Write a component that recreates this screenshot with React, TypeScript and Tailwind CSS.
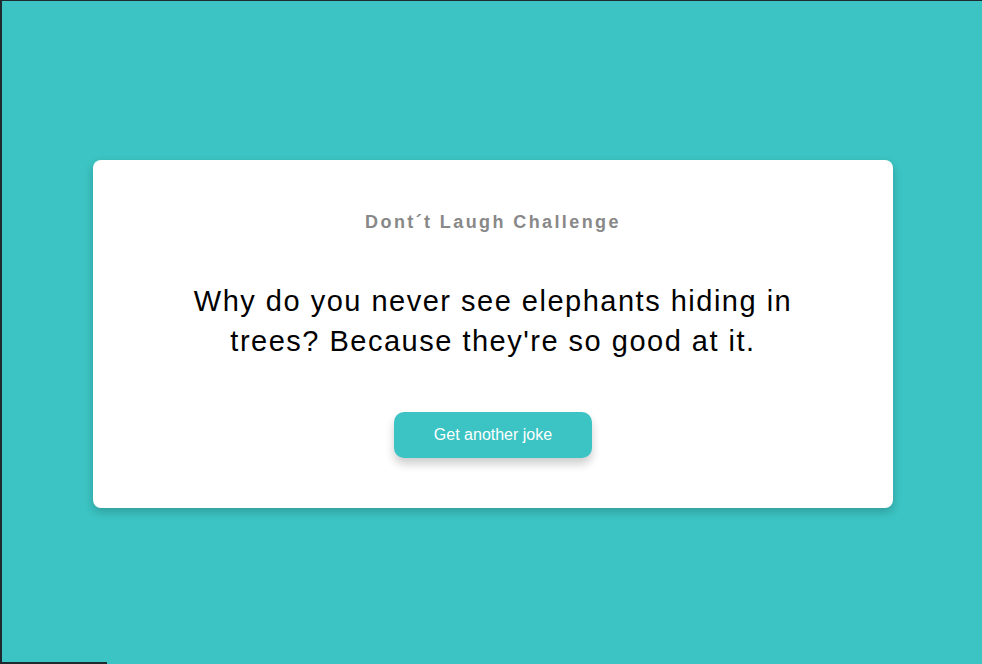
import React from "react";

export default function App() {
  return (
    <div
      className="relative flex h-[664px] w-full items-center justify-center border-l-2 border-t border-[#1f2a2e] bg-[#3bc4c3] pl-[2px] pt-[3px]"
      style={{ fontFamily: '"Liberation Sans", Arial, sans-serif' }}
    >
      <div className="flex w-[800px] flex-col items-center rounded-lg bg-white px-[50px] pb-[50px] pt-[52px] shadow-[0_4px_10px_rgba(0,0,0,0.2)]">
        <h3 className="text-[18px] font-bold leading-[20px] tracking-[2.4px] text-[#888888]">Dont´t Laugh Challenge</h3>
        <p className="mt-[49px] max-w-[640px] text-center text-[29px] leading-[40px] tracking-[1.5px] text-black">
          Why do you never see elephants hiding in trees? Because they're so good at it.
        </p>
        <button className="mt-[51px] h-[46px] w-[198px] rounded-[10px] bg-[#3bc4c3] text-[16px] text-white shadow-[0_6px_10px_rgba(0,0,0,0.2)]">
          Get another joke
        </button>
      </div>
      <div className="absolute bottom-0 left-0 h-[2px] w-[105px] bg-[#1f2a2e]" />
    </div>
  );
}
